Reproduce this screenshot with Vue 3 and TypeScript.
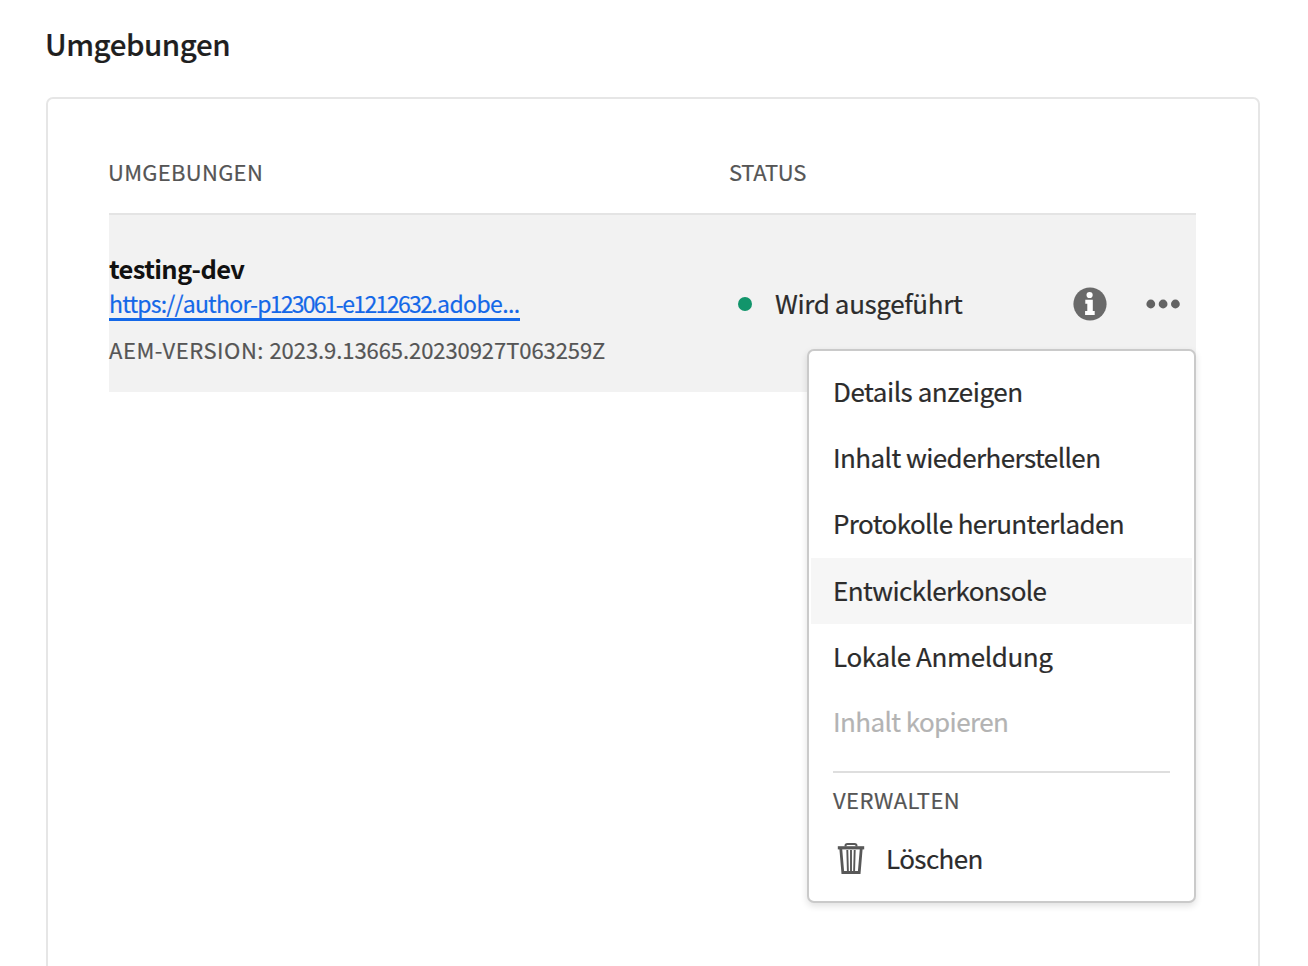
<script setup lang="ts">
interface MenuItem {
  label: string
  id: string
  state?: 'active' | 'disabled'
}

const items: MenuItem[] = [
  { label: 'Details anzeigen', id: 'details' },
  { label: 'Inhalt wiederherstellen', id: 'restore' },
  { label: 'Protokolle herunterladen', id: 'logs' },
  { label: 'Entwicklerkonsole', id: 'console', state: 'active' },
  { label: 'Lokale Anmeldung', id: 'login' },
  { label: 'Inhalt kopieren', id: 'copy', state: 'disabled' },
]
</script>

<template>
  <main class="page">
    <h1 class="title">Umgebungen</h1>
    <section class="card">
      <div class="head">
        <span class="col-env">UMGEBUNGEN</span>
        <span class="col-status">STATUS</span>
      </div>
      <div class="row">
        <div class="env">
          <div class="name">testing-dev</div>
          <a class="link"><span class="scheme">https://</span><span class="host">author-</span><span class="program">p123061</span><span class="environment">-e1212632</span><span class="domain">.adobe...</span></a>
          <div class="version"><span class="version-label">AEM-VERSION: </span><span>2023.9.13665.20230927T063259Z</span></div>
        </div>
        <div class="status">
          <i class="dot"></i>
          <span class="running">Wird ausgeführt</span>
          <svg class="info" viewBox="0 0 34 34">
            <circle cx="17" cy="17" r="16.6" fill="#6a6a6a" />
            <circle cx="16.6" cy="8" r="3.1" fill="#fff" />
            <path d="M12.3 12.8h7.500v11.200h1.900v3.900h-9.600V24h2.200v-7.300h-2z" fill="#fff" />
          </svg>
          <svg class="more" viewBox="0 0 34 10" fill="#636363">
            <circle cx="4.8" cy="5" r="4.4" /><circle cx="17.1" cy="5" r="4.4" /><circle cx="29.4" cy="5" r="4.4" />
          </svg>
        </div>
        <div class="menu">
          <div v-for="item in items" :key="item.id" class="item" :class="[item.id, item.state]">{{ item.label }}</div>
          <hr class="divider" />
          <div class="section">VERWALTEN</div>
          <div class="delete">
            <svg class="trash" viewBox="0 0 28 33" fill="none" stroke="#585858">
              <path d="M8.500 4.500V3.800Q8.500 2 10.500 2h7Q19.500 2 19.500 3.800v.7" stroke-width="2" />
              <path d="M.8 5.800h26.400" stroke-width="3.200" />
              <path d="M3.800 7l2 23.500h16.400l2-23.500" stroke-width="2.800" />
              <path d="M10.300 8l.6 21.500M14 8v21.500M17.700 8l-.6 21.500" stroke-width="1.900" />
            </svg>
            <span class="delete-label">Löschen</span>
          </div>
        </div>
      </div>
    </section>
  </main>
</template>

<style>
html, body { margin: 0; background: #fff; overflow: hidden; }
</style>

<style scoped>
.page {
  box-sizing: border-box;
  width: 1308px;
  height: 966px;
  padding: 19px 48px 0 46px;
  overflow: hidden;
  font-family: "Noto Sans CJK SC", "Noto Sans", sans-serif;
  font-size: 26px;
  letter-spacing: -.53px;
  color: #2c2c2c;
  white-space: nowrap;
  -webkit-text-stroke: .2px currentColor;
}
.title { margin: 0 0 30px -1px; height: 48px; line-height: 48px; font-size: 29.5px; font-weight: 500; letter-spacing: -.45px; color: #1f1f1f; }
.card { box-sizing: border-box; width: 1214px; height: 900px; border: 2px solid #e6e6e6; border-radius: 7px; padding: 42px 61px 0; }
.head { display: flex; height: 72px; line-height: 60px; font-size: 22px; letter-spacing: .3px; color: #555; }
.col-env { box-sizing: border-box; width: 621px; margin-left: -1px; }
.col-status { letter-spacing: -.3px; }
.row { position: relative; display: flex; box-sizing: border-box; width: 1087px; height: 179px; border-top: 2px solid #e4e4e4; background: #f2f2f2; }
.env { width: 621px; padding-top: 35px; }
.name { height: 34px; line-height: 36px; font-size: 25.5px; font-weight: 700; letter-spacing: -.65px; color: #111; -webkit-text-stroke-width: 0; }
.link { display: block; width: max-content; height: 34px; line-height: 38px; border-bottom: 3px solid #1468e8; font-size: 23px; color: #1468e8; }
.scheme { letter-spacing: -.82px; }
.host { letter-spacing: -.75px; }
.program { letter-spacing: -1.75px; }
.environment { letter-spacing: -1.62px; }
.domain { letter-spacing: -.6px; }
.version { height: 36px; line-height: 36px; margin-top: 10px; font-size: 22px; letter-spacing: -.07px; color: #555; }
.version-label { letter-spacing: .54px; }
.status { display: flex; align-items: center; width: 466px; height: 177px; }
.dot { width: 14px; height: 14px; margin-left: 8px; border-radius: 50%; background: #12956b; }
.running { margin: 0 0 2px 23px; width: 298px; letter-spacing: -.37px; }
.info { width: 34px; height: 34px; flex: none; }
.more { width: 34px; height: 10px; margin-left: 39px; flex: none; }
.menu { position: absolute; left: 698px; top: 134px; box-sizing: border-box; width: 389px; height: 554px; padding: 9px 2px 0; border: 2px solid #cacaca; border-radius: 7px; background: #fff; box-shadow: 0 3px 7px rgba(0, 0, 0, .12); }
.item { height: 65.9px; line-height: 63px; padding-left: 22px; }
.details, .restore, .logs { line-height: 61px; }
.details { letter-spacing: -.46px; }
.restore { letter-spacing: -.57px; }
.logs, .console { letter-spacing: -.6px; }
.login { letter-spacing: -.39px; }
.copy { letter-spacing: -.6px; }
.active { background: #f6f6f6; }
.disabled { color: #b3b3b3; }
.divider { height: 2px; margin: 16px 22px 0; border: 0; background: #dedede; }
.section { height: 53px; line-height: 52px; padding-left: 22px; font-size: 22px; letter-spacing: .4px; color: #555; }
.delete { display: flex; align-items: center; height: 65px; padding-left: 26px; }
.delete-label { margin-bottom: 2px; letter-spacing: -.6px; }
.trash { width: 28px; height: 33px; margin-right: 21px; }
</style>
